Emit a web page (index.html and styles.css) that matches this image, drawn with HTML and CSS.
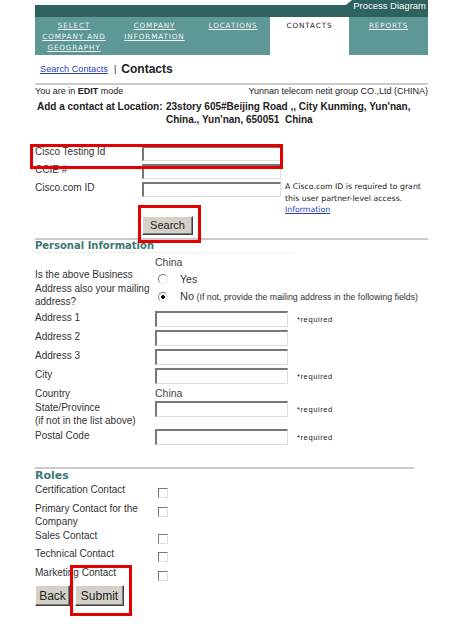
FILE: index.html
```html
<!DOCTYPE html>
<html lang="en">
<head>
    <meta charset="UTF-8">
    <meta name="viewport" content="width=device-width, initial-scale=1.0">
    <title>Contacts</title>
    <link rel="stylesheet" href="styles.css">
</head>
<body>
<div class="page">
    <div class="topbar">
        <div class="process-tab">Process Diagram</div>
    </div>
    <div class="tabs">
        <a class="tab" href="#">SELECT<br>COMPANY AND<br>GEOGRAPHY</a>
        <a class="tab" href="#">COMPANY<br>INFORMATION</a>
        <a class="tab" href="#">LOCATIONS</a>
        <span class="tab active">CONTACTS</span>
        <a class="tab" href="#">REPORTS</a>
    </div>

    <div class="crumbs">
        <a href="#">Search Contacts</a>
        <span class="sep">|</span>
        <b>Contacts</b>
    </div>
    <div class="rule"></div>

    <div class="mode-line">
        <span>You are in <b>EDIT</b> mode</span>
        <span>Yunnan telecom netit group CO.,Ltd (CHINA)</span>
    </div>
    <div class="location">
        <b>Add a contact at Location:</b>
        <b>23story 605#Beijing Road ,, City Kunming, Yun'nan,<br>China., Yun'nan, 650051&nbsp; China</b>
    </div>

    <form class="id-search">
        <label for="testingId">Cisco Testing Id</label>
        <input type="text" id="testingId">
        <span></span>

        <label for="ccie">CCIE #</label>
        <input type="text" id="ccie">
        <span></span>

        <label for="ciscoId">Cisco.com ID</label>
        <input type="text" id="ciscoId">
        <div class="note">A Cisco.com ID is required to grant<br>this user partner-level access.<br><a href="#">Information</a></div>

        <span></span>
        <button type="button" class="btn search-btn">Search</button>
    </form>
    <div class="rule rule-search"></div>

    <h2 class="section-title personal-title">Personal Information</h2>
    <div class="person">
        <div class="row country-top"><span></span><span class="value">China</span></div>
        <div class="row question">
            <span class="label">Is the above Business<br>Address also your mailing<br>address?</span>
            <div class="choices">
                <label class="choice"><input type="radio" name="mailing"><span>Yes</span></label>
                <label class="choice choice-no"><input type="radio" name="mailing" checked><span><span class="no">No</span> (If not, provide the mailing address in the following fields)</span></label>
            </div>
        </div>
        <div class="row field"><span class="label">Address 1</span><input type="text"><span class="req">*required</span></div>
        <div class="row field"><span class="label">Address 2</span><input type="text"></div>
        <div class="row field"><span class="label">Address 3</span><input type="text"></div>
        <div class="row field"><span class="label">City</span><input type="text"><span class="req">*required</span></div>
        <div class="row country"><span class="label">Country</span><span class="value">China</span></div>
        <div class="row field state"><span class="label">State/Province<br>(if not in the list above)</span><input type="text"><span class="req">*required</span></div>
        <div class="row field"><span class="label">Postal Code</span><input type="text"><span class="req">*required</span></div>
    </div>

    <div class="rule rule-roles"></div>
    <h2 class="section-title roles-title">Roles</h2>
    <div class="roles">
        <span class="label">Certification Contact</span><input type="checkbox">
        <span class="label">Primary Contact for the<br>Company</span><input type="checkbox">
        <span class="label">Sales Contact</span><input type="checkbox">
        <span class="label">Technical Contact</span><input type="checkbox">
        <span class="label">Marketing Contact</span><input type="checkbox">
    </div>
    <div class="actions">
        <button type="button" class="btn back-btn">Back</button>
        <button type="button" class="btn submit-btn">Submit</button>
    </div>

    <!-- highlight frames -->
    <div class="mark mark-testing"></div>
    <div class="mark mark-search"></div>
    <div class="mark mark-submit"></div>
</div>
</body>
</html>
```

FILE: styles.css
```css
body {
    margin: 0;
    background: #fff;
    font-family: "Liberation Sans", Arial, sans-serif;
    color: #333;
}
.page {
    position: relative;
    width: 393px;
    margin-left: 35px;
    height: 626px;
}

/* header */
.topbar {
    height: 17px;
    display: flex;
    justify-content: flex-end;
    background: linear-gradient(#fff 0 5px, #2d625f 5px);
}
.process-tab {
    width: 82px;
    background: #2d625f;
    clip-path: polygon(6px 0, 100% 0, 100% 100%, 0 100%, 0 5px);
    color: #fff;
    font-size: 9.5px;
    line-height: 12px;
    text-align: right;
    padding-right: 2px;
    box-sizing: border-box;
}
.tabs {
    display: grid;
    grid-template-columns: 78px 83px 74px 79px 79px;
    height: 38px;
    background: #5e9896;
}
.tab {
    padding-top: 3px;
    text-align: center;
    font-family: "DejaVu Sans", Verdana, sans-serif;
    font-size: 7.2px;
    letter-spacing: 0.9px;
    line-height: 11px;
    color: #eef4f3;
}
.tab.active {
    background: #fff;
    color: #222;
}

.crumbs {
    height: 28px;
    display: flex;
    align-items: center;
    padding-left: 5px;
    font-size: 9.2px;
}
.crumbs a {
    color: #2b3fb5;
}
.crumbs .sep {
    margin: 0 5px 0 6px;
    color: #222;
}
.crumbs b {
    font-size: 12px;
    color: #222;
}
.rule {
    height: 2px;
    background: #cbcbcb;
}

.mode-line {
    display: flex;
    justify-content: space-between;
    font-size: 9px;
    line-height: 12px;
    color: #222;
}
.location {
    display: grid;
    grid-template-columns: 129px 1fr;
    margin-top: 3px;
    padding-left: 2px;
    font-size: 10px;
    line-height: 13px;
    color: #222;
}

/* id lookup */
.id-search {
    display: grid;
    grid-template-columns: 107px 143px 1fr;
    grid-auto-rows: minmax(18px, auto);
    margin: 19px 0 0;
    font-size: 10px;
}
.id-search label {
    padding-top: 1px;
    line-height: 12px;
    color: #333;
}
input[type="text"] {
    box-sizing: border-box;
    margin: 1px 0 0;
    padding: 0;
    border-style: solid;
    border-width: 2px 1px 1px 2px;
    border-color: #777 #ddd #ddd #777;
    background: #fff;
}
.id-search input {
    width: 139px;
    height: 15px;
}
.note {
    font-family: "DejaVu Sans", Verdana, sans-serif;
    font-size: 7.8px;
    line-height: 11.5px;
    white-space: nowrap;
    color: #222;
}
.note a {
    color: #2b3fb5;
}

.btn {
    box-sizing: border-box;
    margin: 0;
    padding: 0;
    background: #d4d0c8;
    border-style: solid;
    border-width: 1px;
    border-color: #fff #404040 #404040 #fff;
    box-shadow: inset -1px -1px 0 #808080;
    font-family: "Liberation Sans", Arial, sans-serif;
    color: #222;
}
.search-btn {
    width: 51px;
    height: 19px;
    font-size: 11px;
}
.rule-search {
    margin-top: 3.5px;
}

/* personal information */
.section-title {
    margin: 0;
    font-family: "DejaVu Sans", Verdana, sans-serif;
    font-weight: bold;
    color: #3c7773;
    line-height: 12px;
}
.personal-title {
    width: 260px;
    font-size: 10px;
    border-bottom: 1px solid #efefef;
}
.person {
    margin-top: 3px;
    font-size: 10px;
}
.row {
    display: grid;
    grid-template-columns: 120px 142px auto;
}
.label {
    line-height: 13.5px;
}
.value {
    font-size: 10.5px;
    color: #444;
}
.country-top .value {
    line-height: 12px;
}
.question {
    height: 41px;
}
.choices {
    grid-column: span 2;
    padding-top: 4px;
}
.choice {
    display: flex;
    align-items: center;
    line-height: 14px;
    font-size: 10.5px;
    white-space: nowrap;
}
.choice-no {
    margin-top: 3px;
    font-size: 8.8px;
}
.choice-no .no {
    font-size: 11px;
}
input[type="radio"] {
    appearance: none;
    box-sizing: border-box;
    width: 10px;
    height: 10px;
    margin: 0 12px 0 3px;
    border-radius: 50%;
    border: 1px solid;
    border-color: #808080 #e2e2e2 #e2e2e2 #808080;
    background: #fff;
}
input[type="radio"]:checked {
    background: radial-gradient(circle, #111 0 1.6px, #fff 2px);
}
.field {
    height: 19px;
}
.field .label {
    padding-top: 1.5px;
    line-height: 13px;
}
.field input {
    width: 133px;
    height: 16px;
    margin-top: 2px;
}
.req {
    padding-top: 6px;
    font-size: 7.5px;
    letter-spacing: 0.6px;
    color: #222;
}
.country {
    height: 14px;
    padding-top: 2px;
    line-height: 12px;
    box-sizing: border-box;
}
.field.state {
    height: 28px;
}
.field.state .label {
    line-height: 13.5px;
}

/* roles */
.rule-roles {
    width: 379px;
    margin-top: 21px;
}
.roles-title {
    font-size: 11px;
    line-height: 13px;
}
.roles {
    display: grid;
    grid-template-columns: 123px 20px;
    grid-auto-rows: minmax(18.5px, auto);
    margin-top: 1px;
    font-size: 10px;
}
input[type="checkbox"] {
    appearance: none;
    box-sizing: border-box;
    width: 10px;
    height: 10px;
    margin: 5px 0 0;
    border: 1px solid;
    border-color: #777 #ddd #ddd #777;
    background: #fff;
}
.actions {
    display: flex;
    gap: 5px;
    margin-top: 1px;
}
.back-btn,
.submit-btn {
    height: 21px;
    font-size: 12px;
}
.back-btn {
    width: 35px;
}
.submit-btn {
    width: 49px;
}

/* red highlight frames */
.mark {
    position: absolute;
    box-sizing: border-box;
    border: 3px solid #e30000;
}
.mark-testing {
    left: -5px;
    top: 144px;
    width: 253px;
    height: 25px;
}
.mark-search {
    left: 103px;
    top: 205px;
    width: 63px;
    height: 38px;
}
.mark-submit {
    left: 35px;
    top: 565px;
    width: 62px;
    height: 51px;
}
```
